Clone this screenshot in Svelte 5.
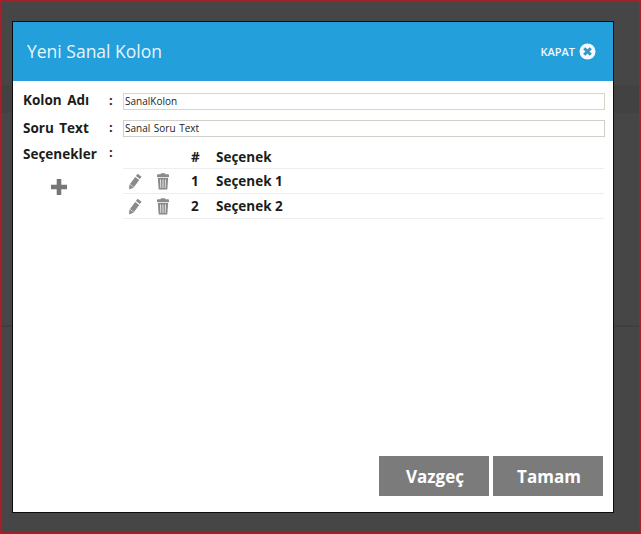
<script>
  let columnName = $state('SanalKolon');
  let questionText = $state('Sanal Soru Text');
  const options = [
    { id: 1, name: 'Seçenek 1' },
    { id: 2, name: 'Seçenek 2' }
  ];
</script>

<div class="page">
  <div class="modal">
    <header class="head">
      <h2 class="title">Yeni Sanal Kolon</h2>
      <button class="close">
        <span>KAPAT</span>
        <svg width="17" height="17" viewBox="0 0 17 17">
          <circle cx="8.500" cy="8.500" r="8" fill="#f4fbfe" />
          <path d="M5.200 5.200l6.600 6.600M11.800 5.200l-6.600 6.600" stroke="#3d97c6" stroke-width="3" />
        </svg>
      </button>
    </header>

    <div class="body">
      <div class="row">
        <span class="label first">Kolon Adı</span>
        <span class="colon">:</span>
        <input class="field first" bind:value={columnName} />
      </div>
      <div class="row">
        <span class="label">Soru Text</span>
        <span class="colon">:</span>
        <input class="field" bind:value={questionText} />
      </div>
      <div class="options">
        <div class="side">
          <div class="side-top">
            <span class="label">Seçenekler</span>
            <span class="colon">:</span>
          </div>
          <svg class="add" width="16" height="16" viewBox="0 0 16 16">
            <path d="M8 0.500v15M0.500 8h15" stroke="#777" stroke-width="4.600" stroke-linecap="round" />
          </svg>
        </div>
        <div class="table">
          <div class="tr th">
            <span class="c-icon"></span>
            <span class="c-icon"></span>
            <span class="c-num">#</span>
            <span>Seçenek</span>
          </div>
          {#each options as opt}
            <div class="tr">
              <span class="c-icon">
                <svg class="pencil" width="15" height="17" viewBox="0 0 15 17">
                  <path d="M4 12.500L9.200 5.400M9.900 4.500L11.600 2.300" stroke="#8a8a8a" stroke-width="5" />
                  <path d="M1 16.500L1.600 11.200L6 14.400Z" fill="#8a8a8a" />
                </svg>
              </span>
              <span class="c-icon">
                <svg width="14" height="17" viewBox="0 0 14 17">
                  <path d="M5 0.300h4l0.400 1H12q1 0 1 1V4H1V2.300q0-1 1-1H4.600z" fill="#8a8a8a" />
                  <path d="M1.800 4.800h10.400l-0.900 11.700H2.700zM4.200 6.500l0.300 8.500h0.700l-0.200-8.500zM6.600 6.500V15h0.800V6.500zM9 6.500L8.800 15h0.700l0.300-8.500z" fill="#8a8a8a" fill-rule="evenodd" />
                </svg>
              </span>
              <span class="c-num">{opt.id}</span>
              <span>{opt.name}</span>
            </div>
          {/each}
        </div>
      </div>
    </div>

    <footer class="foot">
      <button class="btn">Vazgeç</button>
      <button class="btn">Tamam</button>
    </footer>
  </div>
</div>

<style>
  :global(body) { margin: 0; }
  .page {
    box-sizing: border-box;
    width: 641px;
    height: 534px;
    padding: 21px 27px 21px 12px;
    background:
      linear-gradient(#3f3f3f, #3f3f3f) 0 325px / 100% 2px no-repeat,
      linear-gradient(#424242, #424242) 0 85px / 100% 28px no-repeat,
      #464646;
    box-shadow: inset 2px 0 1px #a1222a, inset 0 2px 0 #a1222a, inset -2px 0 0 #a1222a, inset 0 -2px 0 #a1222a;
    font-family: "Open Sans", sans-serif;
  }
  .modal {
    box-sizing: border-box;
    display: flex;
    flex-direction: column;
    height: 100%;
    background: #fff;
    border: 1px solid #0c0c0c;
  }
  .head {
    display: flex;
    align-items: center;
    justify-content: space-between;
    height: 59px;
    flex: none;
    padding: 0 17px 0 14px;
    background: #239fdb;
  }
  .title { margin: -1px 0 0; font-size: 17.500px; font-weight: 400; color: #e6f6fd; }
  .close {
    display: flex;
    align-items: center;
    gap: 4px;
    padding: 0;
    border: 0;
    background: none;
    color: #f0fafe;
    font: 600 11px "Open Sans", sans-serif;
  }
  .body { flex: 1; padding: 11px 8px 0 10px; }
  .row { display: flex; align-items: center; height: 18px; margin-bottom: 9px; }
  .label {
    width: 86px;
    flex: none;
    font-size: 13.500px;
    font-weight: 700;
    word-spacing: 2px;
    color: #1c1c1c;
  }
  .label.first { margin-top: -2px; }
  .colon { width: 14px; flex: none; margin-top: -2px; font-size: 13px; font-weight: 700; color: #1c1c1c; }
  .field {
    box-sizing: border-box;
    width: 482px;
    height: 17px;
    padding: 0 1px;
    border: 1px solid #d0d0c8;
    font: 10px "Open Sans", sans-serif;
    word-spacing: 1px;
    color: #222;
    outline: 0;
  }
  .field.first { border-color: #cfdcc0; }
  .options { display: flex; }
  .side { width: 100px; flex: none; }
  .side-top { display: flex; margin-top: -1px; }
  .add { display: block; margin: 16px 0 0 28px; }
  .table { width: 481px; }
  .tr {
    display: flex;
    align-items: center;
    height: 24px;
    border-bottom: 1px solid #eee;
    font-size: 13.500px;
    font-weight: 700;
    color: #1c1c1c;
  }
  .th { padding-bottom: 1px; box-sizing: content-box; height: 21px; }
  .c-icon { display: flex; justify-content: center; width: 26px; margin-right: 1px; box-sizing: border-box; }
  .pencil { margin-left: -2px; }
  .c-num { width: 39px; padding-left: 14px; box-sizing: border-box; }
  .foot { display: flex; justify-content: flex-end; gap: 4px; padding: 0 10px 16px 0; }
  .btn {
    width: 110px;
    height: 40px;
    padding: 0 0 0 2px;
    border: 0;
    background: #7b7b7b;
    color: #fff;
    font: 700 17px "Open Sans", sans-serif;
  }
</style>
